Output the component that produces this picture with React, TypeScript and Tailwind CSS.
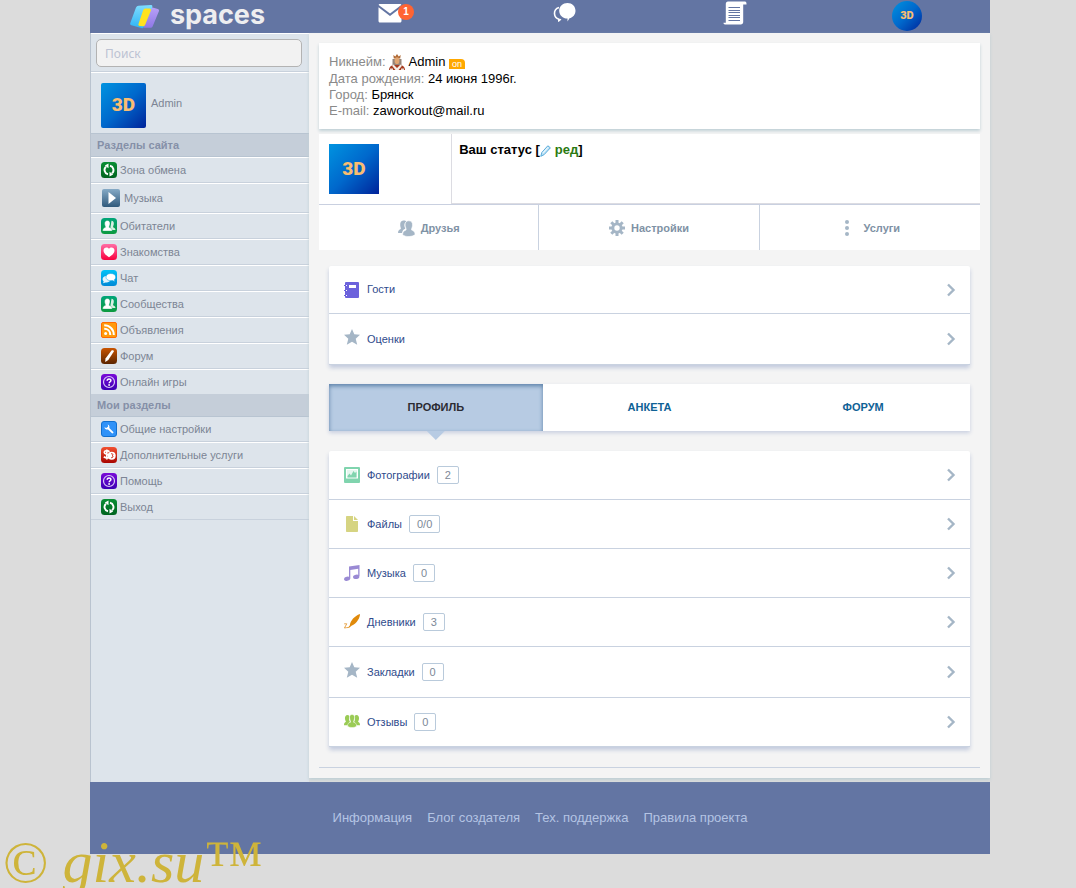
import { useState } from 'react'
import type { ReactNode } from 'react'
import clsx from 'clsx'

type IconProps = { className?: string }

/* Logo and header icons */

function LogoMark() {
  return (
    <svg width="30" height="24" viewBox="0 0 30 24" aria-hidden="true">
      <defs>
        <linearGradient id="logoBlue" x1="0" y1="0" x2="0" y2="1">
          <stop offset="0" stopColor="#7fdcff" />
          <stop offset="1" stopColor="#2fb4f5" />
        </linearGradient>
        <linearGradient id="logoViolet" x1="0" y1="0" x2="0" y2="1">
          <stop offset="0" stopColor="#b9a2f7" />
          <stop offset="1" stopColor="#8f78e6" />
        </linearGradient>
      </defs>
      <path d="M19 1.500l8.800 2.400c1 .3 1.500 1.300 1.100 2.300l-6.200 15c-.4 1-1.400 1.600-2.500 1.600h-6.800L17.500 2.400c.2-.6.800-1 1.500-.9z" fill="url(#logoViolet)" />
      <path d="M8.500.700L21 0c1 0 1.700.9 1.300 1.900l-8.600 20c-.4.9-1.400 1.500-2.400 1.200l-9.900-2.800c-1-.3-1.500-1.300-1.100-2.300L6 2.600C6.500 1.500 7.300.8 8.500.7z" fill="url(#logoBlue)" />
      <path d="M15.700 3.500h3.900c1 0 1.700.9 1.300 1.900l-5.700 14.300c-.4 1-1.400 1.600-2.500 1.500l-3-.1c-1-.1-1.600-1-1.200-2L13.200 5.100c.4-1 1.400-1.600 2.500-1.600z" fill="#ffe21f" />
    </svg>
  )
}

function MailIcon() {
  return (
    <svg width="24" height="20" viewBox="0 0 24 20" fill="#fff" aria-hidden="true">
      <path d="M2 1h20c.8 0 1.300.3 1.300 1L12 10.500.700 2C.700 1.300 1.200 1 2 1z" />
      <path d="M.5 4.300L12 13l11.500-8.700V18c0 .9-.6 1.500-1.500 1.500H2c-.9 0-1.500-.6-1.500-1.500z" />
    </svg>
  )
}

function BubblesIcon() {
  return (
    <svg width="23" height="21" viewBox="0 0 23 21" aria-hidden="true">
      <path d="M6 5.500C3 6.500 1.300 9 1.500 11.800c.2 2.500 2 4.700 4.300 5.400v1.600c1-.5 1.500-1 2-1.700" fill="none" stroke="#fff" strokeWidth="1.600" />
      <path d="M14.500 1c4.600 0 8 3.400 8 7.700 0 3.700-2.600 6.800-6 7.600L14.500 19.500v-3c-4.800 0-8.300-3.400-8.300-7.800S9.900 1 14.500 1z" fill="#fff" />
    </svg>
  )
}

function ScrollIcon() {
  return (
    <svg width="24" height="24" viewBox="0 0 24 24" aria-hidden="true">
      <path d="M5 .5h17c1 0 1.700 1 1.500 3h-3.300V21c0 1.500-1 2.500-2.500 2.500H2c-1 0-1.500-.6-1.500-1.700h2.300V3C2.800 1.500 3.600.5 5 .5z" fill="#fff" />
      <path d="M5.500 6.500h11.500M5.500 9.500h11.500M5.500 11.500h11.500M5.500 14.500h11.500M5.500 16.500h11.500M5.500 19.500h11.500" stroke="#6375a3" strokeWidth="1" />
    </svg>
  )
}

function Avatar({ className }: IconProps) {
  return (
    <span
      className={clsx(
        "flex shrink-0 items-center justify-center bg-linear-to-br from-[#0093e0] via-[#0068cc] to-[#00219a] font-['Roboto',sans-serif] font-black text-[#f9bd72]",
        className
      )}
    >
      3D
    </span>
  )
}

/* Sidebar icons: a coloured rounded tile with a white glyph */

function Tile({ from, to, id, children }: { from: string; to: string; id: string; children: ReactNode }) {
  return (
    <svg width="16" height="16" viewBox="0 0 16 16" className="shrink-0" aria-hidden="true">
      <defs>
        <linearGradient id={id} x1="0" y1="0" x2="0" y2="1">
          <stop offset="0" stopColor={from} />
          <stop offset="1" stopColor={to} />
        </linearGradient>
      </defs>
      <rect width="16" height="16" rx="3.500" fill={`url(#${id})`} />
      {children}
    </svg>
  )
}

function ExchangeTile() {
  return (
    <Tile id="tileExchange" from="#0a8f35" to="#00631f">
      <path d="M7 12.300A4.400 4.400 0 0 1 5 4.700M9 3.700a4.400 4.400 0 0 1 2 7.600" fill="none" stroke="#fff" strokeWidth="1.900" />
      <path d="M7.500 1.500v4.800L3.800 3.500zM8.500 14.500V9.700l3.700 2.800z" fill="#fff" />
    </Tile>
  )
}

function PlayTile() {
  return (
    <svg width="18" height="18" viewBox="0 0 18 18" className="mr-px ml-px shrink-0" aria-hidden="true">
      <defs>
        <linearGradient id="tilePlay" x1="0" y1="0" x2="0" y2="1">
          <stop offset="0" stopColor="#86aac6" />
          <stop offset="1" stopColor="#305a7c" />
        </linearGradient>
      </defs>
      <rect width="18" height="18" rx="2" fill="url(#tilePlay)" />
      <path d="M6.500 3L14 9l-7.500 6z" fill="#fff" />
    </svg>
  )
}

function PeopleTile() {
  return (
    <Tile id="tilePeople" from="#00a579" to="#0d9a3f">
      <path d="M10.500 2.800c1.700 0 2.500 1.300 2.300 3.100-.1 1.500-.9 2.200-.7 3.300 1.300.5 2.200 1 2.400 2.800H9z" fill="#d9efe3" />
      <path d="M6.300 2.500c1.900 0 2.900 1.400 2.700 3.400-.1 1.500-.9 2.300-.8 3.400 1.700.6 2.900 1.400 3.100 3.800H1.600c.1-2.300 1.200-3.200 2.800-3.800 0-1.100-.7-1.900-.8-3.400-.1-2 .8-3.400 2.700-3.400z" fill="#fff" stroke="#0a9d58" strokeWidth=".4" />
    </Tile>
  )
}

function HeartTile() {
  return (
    <Tile id="tileHeart" from="#ff6ea6" to="#f9003e">
      <path d="M8 13.200C4.500 11 2.500 9 2.500 6.500 2.500 4.500 3.900 3.400 5.400 3.400c1.100 0 2 .5 2.600 1.400.6-.9 1.500-1.400 2.600-1.400 1.500 0 2.900 1.100 2.900 3.100 0 2.500-2 4.500-5.500 6.700z" fill="#fff" />
    </Tile>
  )
}

function ChatTile() {
  return (
    <Tile id="tileChat" from="#00c3f8" to="#0089d6">
      <path d="M5.500 6C3 6.200 1.600 7.500 1.600 9.200c0 .9.400 1.600 1.100 2.200l-.7 1.900 2.500-.9c2.500.3 4.300-.6 4.700-2.100z" fill="#e3f4fc" />
      <path d="M9.800 3.500c2.900 0 4.900 1.500 4.900 3.600 0 1.200-.5 2-1.400 2.700l.5 1.700-2.300-1c-3.700.7-6.500-.9-6.500-3.400 0-2.100 2-3.600 4.800-3.600z" fill="#fff" stroke="#0aa3e4" strokeWidth=".5" />
    </Tile>
  )
}

function RssTile() {
  return (
    <svg width="16" height="16" viewBox="0 0 16 16" className="shrink-0" aria-hidden="true">
      <rect x=".5" y=".5" width="15" height="15" rx="1.500" fill="#ff9a0c" stroke="#ff6a00" />
      <circle cx="4.600" cy="11.500" r="1.500" fill="#fff" />
      <path d="M3.200 6.800c3.500 0 6.100 2.600 6.100 6.100M3.200 3.300c5.400 0 9.600 4.200 9.600 9.600" fill="none" stroke="#fff" strokeWidth="2" />
    </svg>
  )
}

function PenTile() {
  return (
    <Tile id="tilePen" from="#c95400" to="#5b2500">
      <path d="M10.500 2.500c1-.8 2.500-.2 2.300 1L7.300 12 4.200 14l.3-3.600z" fill="#fff" />
    </Tile>
  )
}

function QuestionTile() {
  return (
    <Tile id="tileQuestion" from="#7a0ad8" to="#3d00b4">
      <circle cx="8" cy="8" r="5.500" fill="none" stroke="#d9c8f7" strokeWidth="1.200" />
      <path d="M6.200 6.800c0-2.400 3.700-2.300 3.700-.3 0 1.200-1.700 1.300-1.700 2.700" fill="none" stroke="#fff" strokeWidth="1.500" />
      <circle cx="8.100" cy="11" r=".9" fill="#fff" />
    </Tile>
  )
}

function WrenchTile() {
  return (
    <svg width="16" height="16" viewBox="0 0 16 16" className="shrink-0" aria-hidden="true">
      <rect x=".5" y=".5" width="15" height="15" rx="2.500" fill="#2f92f8" stroke="#1170cf" />
      <path d="M6.700 3.500c1.500.6 2.200 2.200 1.600 3.600l4 3.900c.6.600-.6 1.900-1.300 1.300L7 8.400C5.400 8.900 3.700 8 3.400 6.200l1.900.8 1.900-1.500z" fill="#fff" />
    </svg>
  )
}

function MoneyTile() {
  return (
    <Tile id="tileMoney" from="#f25131" to="#a80500">
      <circle cx="10.700" cy="8.800" r="4" fill="#fff" />
      <path d="M8.500 4.800C6 3 3.200 3.600 3.300 5.500c.1 2 5 1.500 5.100 3.700.1 1.900-3.200 2.300-5.600.5M5.800 2.500v10" fill="none" stroke="#fff" strokeWidth="1.700" />
      <path d="M10 6.800c2.200-.3 2.600 1.300 1 1.900 1.800.4 1 2.200-.8 2" fill="none" stroke="#cf2a17" strokeWidth="1" />
    </Tile>
  )
}

/* Profile icons */

function KingIcon() {
  return (
    <svg width="16" height="16" viewBox="0 0 16 16" className="mr-1 ml-[3px] inline-block align-[-4px]" aria-hidden="true">
      <path d="M3.500 5h9v7h-9z" fill="#94857a" />
      <path d="M4.300 1l2 1.500L8 0l1.700 2.500 2-1.500-.5 3.500H4.800z" fill="#b06a35" />
      <ellipse cx="8" cy="6.700" rx="2.400" ry="3.400" fill="#e0a673" />
      <path d="M0 16c0-3.200 2-4.500 4.800-5h6.400c2.800.5 4.800 1.800 4.800 5z" fill="#a53a1e" />
      <path d="M4.500 10.500L8 14l3.500-3.500 1.500 1.300L9.500 16h-3L3 11.800z" fill="#f5efe9" />
      <path d="M1 14.500h3V16H1zM12 14.500h3V16h-3z" fill="#e9dcd3" />
    </svg>
  )
}

function PencilIcon() {
  return (
    <svg width="11" height="12" viewBox="0 0 11 12" className="mr-1 inline-block align-[-3px]" aria-hidden="true">
      <path d="M7.800.800l2.600 2L4.200 9.600.8 11.300l1-3.800z" fill="#bfe4f7" stroke="#4ba3d6" strokeWidth=".9" />
      <path d="M3 7.800l5-5.500" stroke="#fff" />
    </svg>
  )
}

function FriendsIcon() {
  return (
    <svg width="17" height="17" viewBox="0 0 17 17" fill="#a5b6c6" aria-hidden="true">
      <path d="M5.200.600c1.600-.2 2.500.2 3 .8C6.600 2.600 6.300 4.400 6.500 6c.1 1.300.6 2 .9 2.700-1.700.7-3 1.500-3.300 4.300H0c.1-2.700 1.300-3.300 2.800-4 .3-.9-.5-2.100-.6-3.800C2 2.500 3.200.8 5.200.6z" />
      <path d="M10.800.800c2.600 0 3.900 1.600 3.700 4.400-.1 2.100-1.100 3.200-1 4.700 2 .8 3.500 1.500 3.600 4.500-1.500 2.300-10.300 3.300-12.500 0 .2-2.900 1.500-3.700 3.500-4.500.2-1.500-.8-2.600-1-4.700-.2-2.800 1.100-4.400 3.700-4.400z" stroke="#fff" strokeWidth=".6" />
    </svg>
  )
}

function GearIcon() {
  return (
    <svg width="16" height="16" viewBox="0 0 16 16" aria-hidden="true">
      <g stroke="#a5b6c6" strokeWidth="3">
        <path d="M8 0v16M0 8h16M2.300 2.300l11.400 11.400M13.700 2.300L2.300 13.700" />
      </g>
      <circle cx="8" cy="8" r="5.600" fill="#a5b6c6" />
      <circle cx="8" cy="8" r="2.700" fill="#fff" />
    </svg>
  )
}

function DotsIcon() {
  return (
    <svg width="18" height="16" viewBox="0 0 18 16" fill="#a5b6c6" aria-hidden="true">
      <circle cx="7" cy="2" r="2" />
      <circle cx="7" cy="8" r="2" />
      <circle cx="7" cy="14" r="2" />
    </svg>
  )
}

/* List icons */

function NotebookIcon() {
  return (
    <svg width="16" height="16" viewBox="0 0 16 16" fill="#6c62dc" aria-hidden="true">
      <rect x="1" width="14" height="16" rx="1" />
      <path d="M0 3h2v1H0zM0 8h2v1H0zM0 13h2v1H0z" />
      <path d="M5 3h7v3H5zM2 3h1v1H2zM2 8h1v1H2zM2 13h1v1H2z" fill="#fff" />
    </svg>
  )
}

function StarIcon() {
  return (
    <svg width="16" height="20" viewBox="0 0 16 20" fill="#a5b6c6" aria-hidden="true">
      <path d="M8 0l2.300 5.300 5.700.5-4.300 3.900 1.500 6.100L8 12.700l-5.200 3.100 1.500-6.100L0 5.800l5.700-.5z" />
    </svg>
  )
}

function PhotoIcon() {
  return (
    <svg width="16" height="16" viewBox="0 0 16 16" aria-hidden="true">
      <rect width="16" height="16" rx="1" fill="#80d4ae" />
      <path d="M2 2h12v9.500H2z" fill="#fff" />
      <path d="M3 3h10v7.500H3z" fill="#b5e6d0" opacity=".35" />
      <path d="M3.500 10.500V9l2-2.500 1.500 2 2.500-4.500 1.500 2 1.500-1.500v6z" fill="#80d4ae" />
    </svg>
  )
}

function FileIcon() {
  return (
    <svg width="16" height="16" viewBox="0 0 16 16" fill="#d6d482" aria-hidden="true">
      <path d="M3 0h6v5h5v10c0 .6-.4 1-1 1H3c-.6 0-1-.4-1-1V1c0-.6.400-1 1-1z" />
      <path d="M10 0l4 4h-4z" />
    </svg>
  )
}

function MusicIcon() {
  return (
    <svg width="16" height="16" viewBox="0 0 16 16" fill="#9a8ad4" aria-hidden="true">
      <path d="M5 1.500L15.500 0v11h-1.300V3.800L6.300 5v8.500H5z" />
      <ellipse cx="3.100" cy="13.800" rx="3.100" ry="2.100" transform="rotate(-12 3.100 13.800)" />
      <ellipse cx="12.200" cy="11.800" rx="3.200" ry="2.200" transform="rotate(-12 12.200 11.800)" />
    </svg>
  )
}

function FeatherIcon() {
  return (
    <svg width="16" height="16" viewBox="0 0 16 16" aria-hidden="true">
      <path d="M16 0c0 3.500-2.800 9.500-8.500 11.800L4.800 14l-.8-.6 1.800-2C6.500 6.500 10.500 2 16 0z" fill="#e08a0b" />
      <path d="M.2 9.800h2.600L.4 14c1.700-.6 2.700-.2 4.200-.5" fill="none" stroke="#e6a54c" />
    </svg>
  )
}

function CrowdIcon() {
  return (
    <svg width="16" height="16" viewBox="0 0 17 17" fill="#9acb55" aria-hidden="true">
      <path d="M3.500 1c1 0 1.800.3 2.200 1-.9 2.400-.3 4.500.6 6L4.500 12H0c0-2.500.8-3.100 2-3.500C2 7.500 1 6.500 1 4.500 1 2.500 2 1 3.500 1zM13.500 1c-1 0-1.800.3-2.200 1 .9 2.400.3 4.500-.6 6l1.800 4H17c0-2.500-.8-3.100-2-3.500 0-1 1-2 1-4C16 2.500 15 1 13.500 1z" />
      <path d="M8.500.500c2 0 2.900 1.400 2.800 3.600 0 2-1.200 3-1.100 4.600 2 .6 3.200 1.500 3.200 4.300-2.200 1.900-7.400 1.900-9.600 0 0-2.800 1-3.700 3.200-4.300.1-1.600-1.100-2.600-1.100-4.600C5.800 1.900 6.600.5 8.500.5z" stroke="#fff" strokeWidth=".5" />
    </svg>
  )
}

function ChevronIcon() {
  return (
    <svg width="10" height="14" viewBox="0 0 10 14" className="ml-auto" aria-hidden="true">
      <path d="M2 1.500L7.500 7 2 12.500" fill="none" stroke="#a5b6c6" strokeWidth="2.400" />
    </svg>
  )
}

const siteSections = [
  { label: 'Зона обмена', icon: <ExchangeTile /> },
  { label: 'Музыка', icon: <PlayTile />, tall: true },
  { label: 'Обитатели', icon: <PeopleTile /> },
  { label: 'Знакомства', icon: <HeartTile /> },
  { label: 'Чат', icon: <ChatTile /> },
  { label: 'Сообщества', icon: <PeopleTile /> },
  { label: 'Объявления', icon: <RssTile /> },
  { label: 'Форум', icon: <PenTile /> },
  { label: 'Онлайн игры', icon: <QuestionTile /> },
]

const mySections = [
  { label: 'Общие настройки', icon: <WrenchTile /> },
  { label: 'Дополнительные услуги', icon: <MoneyTile /> },
  { label: 'Помощь', icon: <QuestionTile /> },
  { label: 'Выход', icon: <ExchangeTile /> },
]

const actions = [
  { label: 'Друзья', icon: <FriendsIcon /> },
  { label: 'Настройки', icon: <GearIcon /> },
  { label: 'Услуги', icon: <DotsIcon /> },
]

const activity = [
  { label: 'Гости', icon: <NotebookIcon /> },
  { label: 'Оценки', icon: <StarIcon /> },
]

const content = [
  { label: 'Фотографии', icon: <PhotoIcon />, count: '2' },
  { label: 'Файлы', icon: <FileIcon />, count: '0/0' },
  { label: 'Музыка', icon: <MusicIcon />, count: '0' },
  { label: 'Дневники', icon: <FeatherIcon />, count: '3' },
  { label: 'Закладки', icon: <StarIcon />, count: '0' },
  { label: 'Отзывы', icon: <CrowdIcon />, count: '0' },
]

const tabs = ['Профиль', 'Анкета', 'Форум']

const footerLinks = ['Информация', 'Блог создателя', 'Тех. поддержка', 'Правила проекта']

type Item = { label: string; icon: ReactNode; count?: string; tall?: boolean }

function SideTitle({ children }: { children: ReactNode }) {
  return (
    <h2 className="border-b border-[#b8c4d1] bg-[#c5ced9] px-1.5 text-[11px] leading-[22px] font-bold text-[#8590a8]">
      {children}
    </h2>
  )
}

function SideMenu({ items, className }: { items: Item[]; className?: string }) {
  return (
    <ul className={className}>
      {items.map((item) => (
        <li key={item.label} className="border-t border-b border-t-white border-b-[#c8d1dc]">
          <a href="#" className={clsx('flex items-center gap-[3px] pl-2.5', item.tall ? 'h-7' : 'h-6')}>
            {item.icon}
            {item.label}
          </a>
        </li>
      ))}
    </ul>
  )
}

function LinkList({ items }: { items: Item[] }) {
  return (
    <ul className="rounded-xs bg-white shadow-[0_3px_4px_#c3cbde]">
      {items.map((item) => (
        <li key={item.label} className="border-b border-[#c9d2e0]">
          <a href="#" className="flex items-center gap-[7px] py-[15px] pr-3.5 pl-[15px] text-[11px] leading-[17px] text-[#2f4b8c]">
            {item.icon}
            {item.label}
            {item.count && (
              <span className="rounded-xs border border-[#b9cadb] px-[7px] leading-4 text-[#7d8997]">{item.count}</span>
            )}
            <ChevronIcon />
          </a>
        </li>
      ))}
    </ul>
  )
}

export default function App() {
  const [tab, setTab] = useState(tabs[0])

  return (
    <div className="relative min-h-screen overflow-hidden bg-[#dcdcdc] pl-1 font-['Liberation_Sans',Arial,sans-serif] text-[13px]">
      <div className="mx-auto max-w-[900px]">
        {/* Header */}
        <header className="flex h-[33px] bg-[#6375a3]">
          <a href="#" className="flex w-[219px] shrink-0 items-center justify-center gap-2.5 pr-1 font-['Inter',sans-serif] text-[27px] leading-7 font-bold text-[#eeeef0]">
            <LogoMark />
            <span className="pb-1">spaces</span>
          </a>
          <nav className="grid flex-1 grid-cols-4 justify-items-center">
            <a href="#" aria-label="Почта" className="flex items-start pt-[3px] pl-1">
              <MailIcon />
              <span className="mt-px -ml-1 size-4 rounded-full bg-[#ff6433] text-center text-[10px] leading-4 font-bold text-white">1</span>
            </a>
            <a href="#" aria-label="Обсуждения" className="pt-0.5">
              <BubblesIcon />
            </a>
            <a href="#" aria-label="Лента" className="pt-px">
              <ScrollIcon />
            </a>
            <a href="#" aria-label="Моя страница" className="pt-px pl-1">
              <Avatar className="size-[30px] rounded-full text-[11px]" />
            </a>
          </nav>
        </header>

        <div className="flex">
          {/* Sidebar */}
          <aside className="w-[219px] shrink-0 border-l border-[#b9c3cf] bg-[#dde4eb] text-[11px] text-[#7c8494]">
            <form className="border-t border-b border-t-white border-b-[#c8d1dc] pt-[5px] pr-[7px] pb-1 pl-[5px]">
              <input
                type="search"
                aria-label="Поиск"
                placeholder="Поиск"
                className="block h-7 w-full rounded-[5px] border border-[#b3b3b3] bg-[#f2f2f2] px-2 font-['Noto_Sans',sans-serif] text-[12px] outline-none placeholder:text-[#bcc2d3]"
              />
            </form>
            <a href="#" className="flex items-center gap-[5px] border-t border-b border-t-white border-b-[#b8c4d1] px-2.5 pt-2.5 pb-[5px]">
              <Avatar className="size-[45px] rounded-xs text-[19px]" />
              <span className="pb-1">Admin</span>
            </a>
            <SideTitle>Разделы сайта</SideTitle>
            <SideMenu items={siteSections} className="[&>li:last-child]:border-b-0" />
            <SideTitle>Мои разделы</SideTitle>
            <SideMenu items={mySections} className="[&>li:first-child]:border-t-0" />
          </aside>

          {/* Profile */}
          <main className="mb-1 min-w-0 flex-1 bg-[#f4f4f4] p-2.5 shadow-[0_2px_3px_#bfd0d6]">
            <section className="mb-[5px] bg-white p-2.5 leading-4 shadow-[0_2px_3px_#bfd0d6]">
              <p className="h-[18px] leading-[18px] text-[#8a8a8a]">
                Никнейм:
                <KingIcon />
                <span className="text-black">Admin</span>{' '}
                <span className="inline-block rounded-tr-sm bg-[#ffa800] px-[3px] align-[-1px] text-[9px] leading-[10px] text-white">on</span>
              </p>
              <p className="text-[#8a8a8a]">Дата рождения: <span className="text-black">24 июня 1996г.</span></p>
              <p className="text-[#8a8a8a]">Город: <span className="text-black">Брянск</span></p>
              <p className="text-[#8a8a8a]">E-mail: <span className="text-black">zaworkout@mail.ru</span></p>
            </section>

            <section className="flex border-b border-[#c9d0e0] bg-white">
              <div className="w-1/5 p-2.5">
                <Avatar className="size-[50px] text-[19px]" />
              </div>
              <p className="flex-1 border-b border-l border-[#dcdce2] px-[7px] pt-2 leading-4 font-bold text-black">
                Ваш статус [<a href="#" className="text-[#2a7a10]"><PencilIcon />ред</a>]
              </p>
            </section>
            <nav className="grid grid-cols-3 divide-x divide-[#c9d2e0] bg-white">
              {actions.map((action) => (
                <a key={action.label} href="#" className="flex h-[45px] items-center justify-center gap-1.5 pt-px text-[11px] font-bold text-[#7f92a5]">
                  {action.icon}
                  {action.label}
                </a>
              ))}
            </nav>

            <div className="border-b border-[#c9d2e0] px-2.5 pt-4 pb-5">
              <LinkList items={activity} />

              <div role="tablist" className="mt-[19px] mb-5 grid grid-cols-3 bg-white shadow-[0_2px_4px_#c8cfe0]">
                {tabs.map((name) => (
                  <button
                    key={name}
                    type="button"
                    role="tab"
                    aria-selected={tab === name}
                    onClick={() => setTab(name)}
                    className={clsx(
                      'relative h-[47px] cursor-pointer text-[11px] font-bold uppercase',
                      tab === name
                        ? 'bg-[#b7cbe3] text-[#2b2b33] shadow-[inset_0_2px_4px_#5b80a8]'
                        : 'text-[#0f6296]'
                    )}
                  >
                    {name}
                    {tab === name && (
                      <span className="absolute top-full left-1/2 h-[9px] w-[18px] -translate-x-1/2 bg-[#b7cbe3] [clip-path:polygon(0_0,100%_0,50%_100%)]" />
                    )}
                  </button>
                ))}
              </div>

              <LinkList items={content} />
            </div>
          </main>
        </div>

        <footer className="flex h-[72px] items-center justify-center gap-[15px] bg-[#6375a3] text-[#b4c4e4]">
          {footerLinks.map((link) => (
            <a key={link} href="#">
              {link}
            </a>
          ))}
        </footer>
      </div>

      {/* Watermark */}
      <div className="pointer-events-none absolute bottom-0 left-0.5 h-14 font-['Liberation_Serif','Times_New_Roman',serif] text-[60px] leading-[60px] whitespace-nowrap text-[#ceb43a]">
        <i>© gix.su</i>™
      </div>
    </div>
  )
}
